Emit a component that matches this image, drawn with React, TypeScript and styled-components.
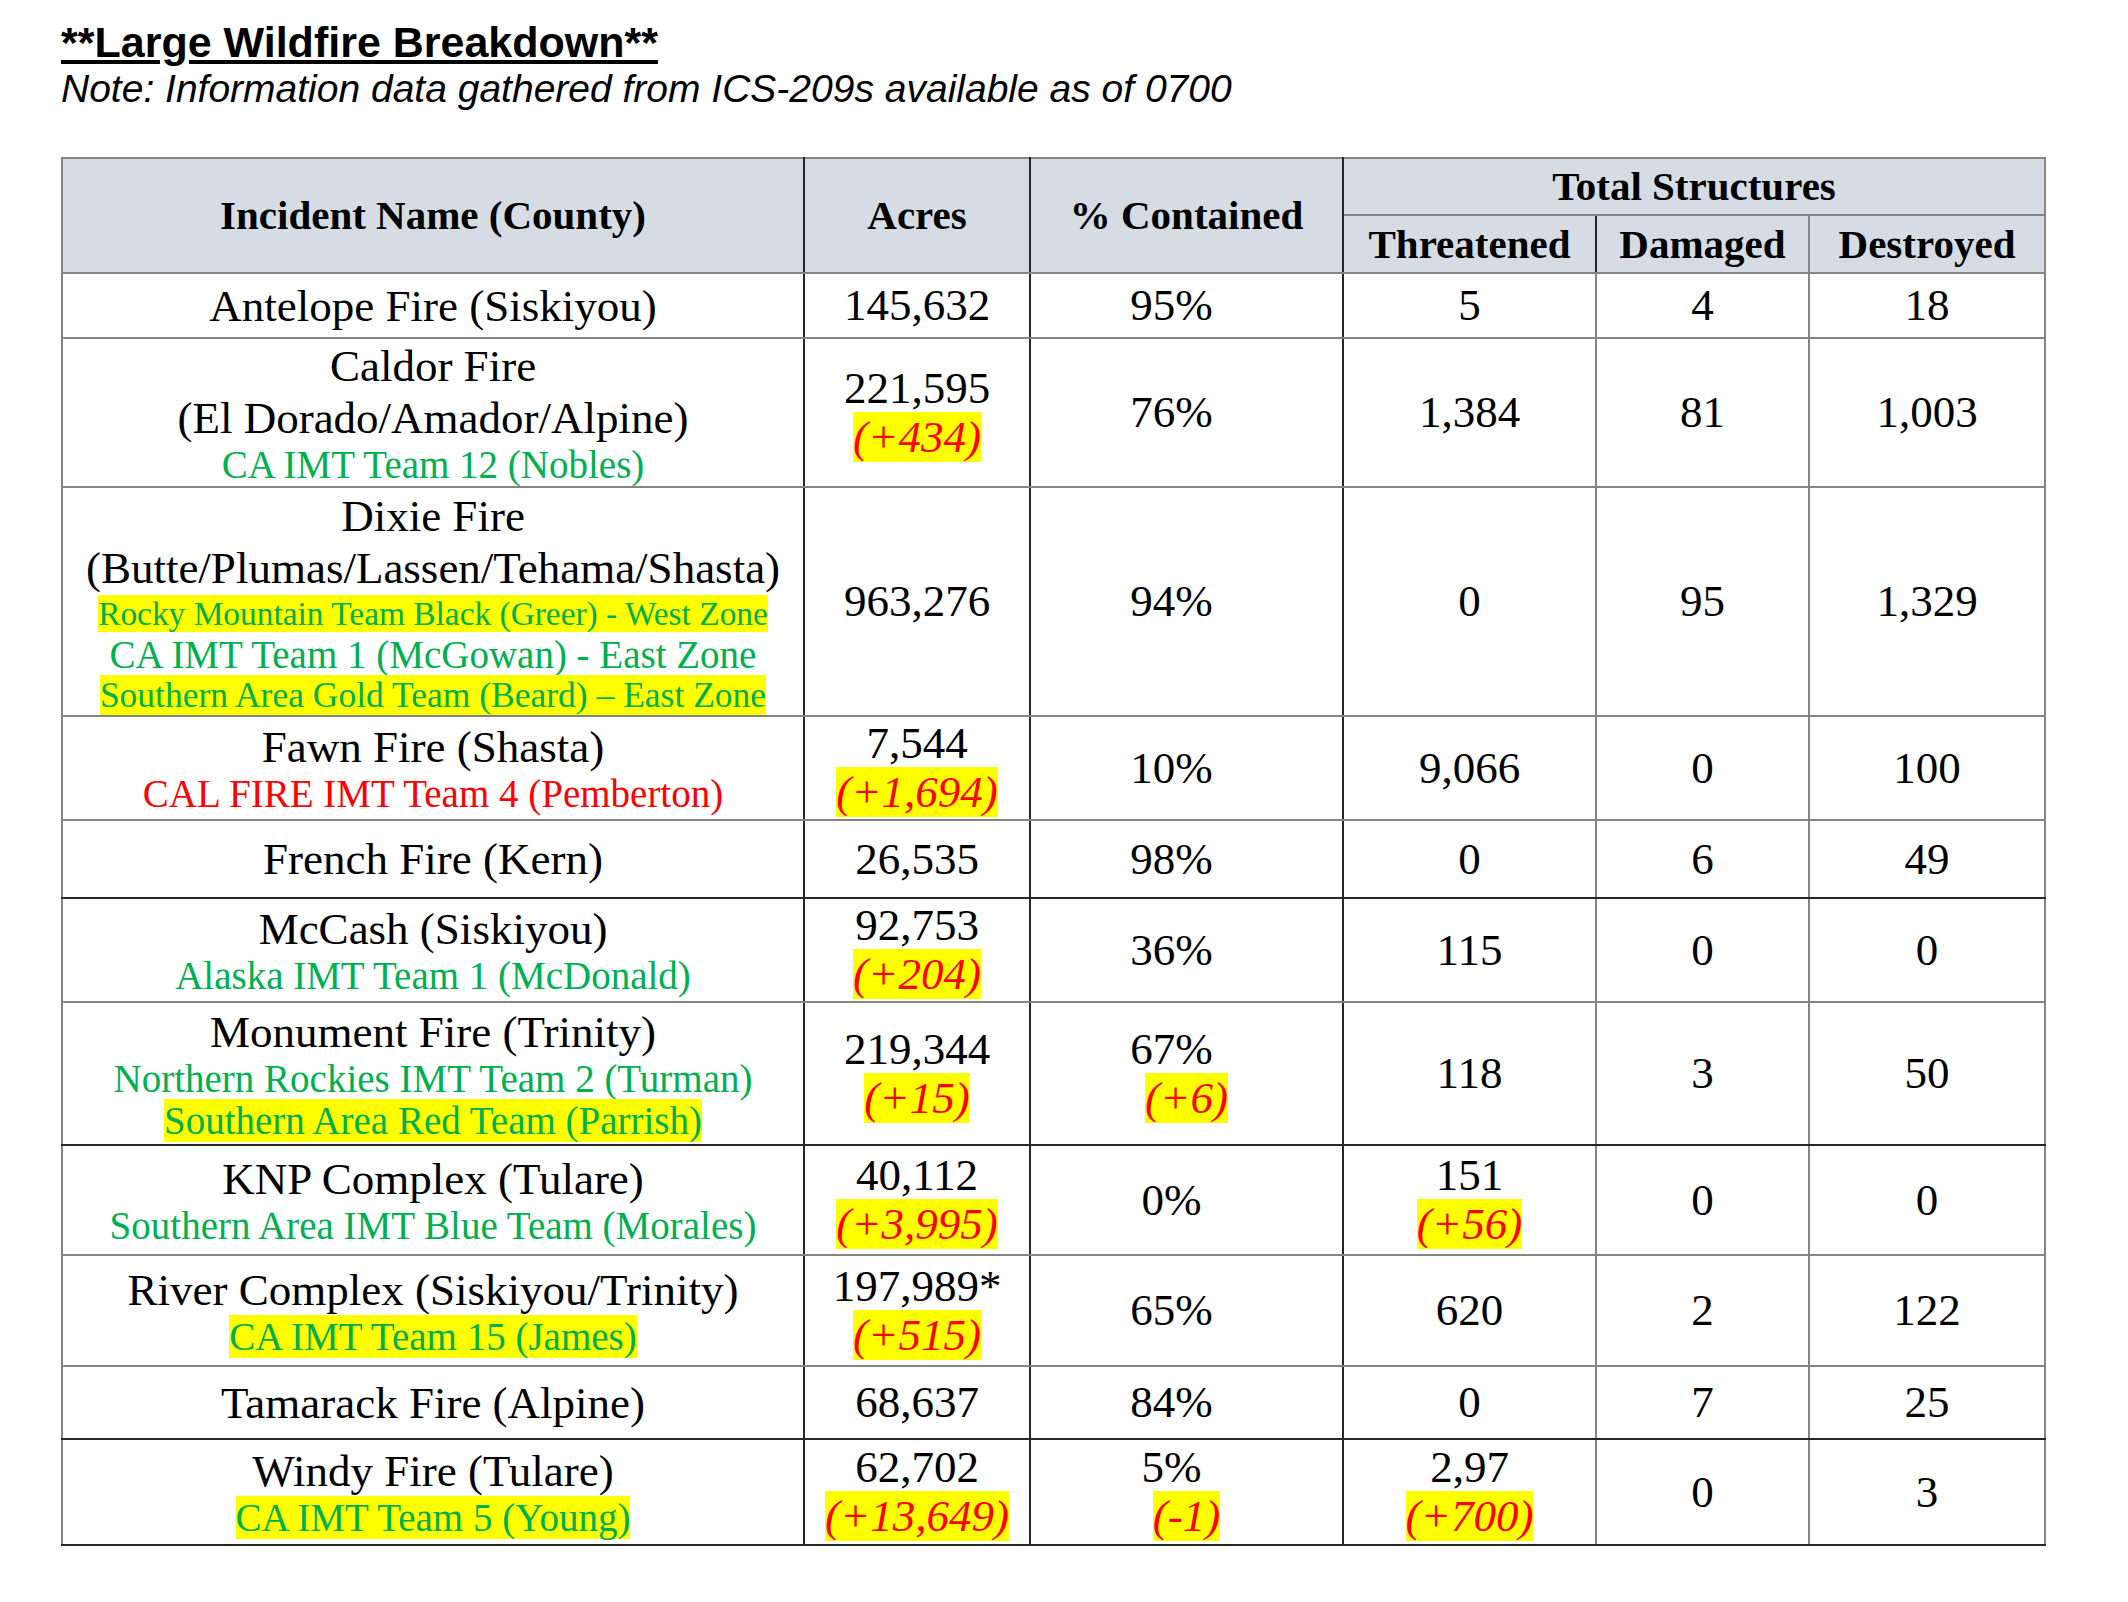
import React from "react";
import styled, { createGlobalStyle } from "styled-components";

const GREEN = "#00b050";
const RED = "#ff0000";
const YELLOW = "#ffff00";
const HEAD_BG = "#d5dce4";
const LINE_GRAY = "#858585";
const LINE_DARK = "#262626";

type Team = { text: string; hl?: boolean; color?: string; size?: number; lh?: number };
type Val = { v: string; d?: string };
type Incident = {
  h: number;
  bottom: "gray" | "dark";
  name: string[];
  teams: Team[];
  acres: Val;
  pct: Val;
  thr: Val;
  dam: string;
  des: string;
};

const incidents: Incident[] = [
  {
    h: 65,
    bottom: "gray",
    name: ["Antelope Fire (Siskiyou)"],
    teams: [],
    acres: { v: "145,632" },
    pct: { v: "95%" },
    thr: { v: "5" },
    dam: "4",
    des: "18",
  },
  {
    h: 149,
    bottom: "gray",
    name: ["Caldor Fire", "(El Dorado/Amador/Alpine)"],
    teams: [{ text: "CA IMT Team 12 (Nobles)" }],
    acres: { v: "221,595", d: "(+434)" },
    pct: { v: "76%" },
    thr: { v: "1,384" },
    dam: "81",
    des: "1,003",
  },
  {
    h: 229,
    bottom: "gray",
    name: ["Dixie Fire", "(Butte/Plumas/Lassen/Tehama/Shasta)"],
    teams: [
      { text: "Rocky Mountain Team Black (Greer) - West Zone", hl: true, size: 33.4, lh: 40 },
      { text: "CA IMT Team 1 (McGowan) - East Zone" },
      { text: "Southern Area Gold Team (Beard) \u2013 East Zone", hl: true, size: 35.5, lh: 38 },
    ],
    acres: { v: "963,276" },
    pct: { v: "94%" },
    thr: { v: "0" },
    dam: "95",
    des: "1,329",
  },
  {
    h: 104,
    bottom: "gray",
    name: ["Fawn Fire (Shasta)"],
    teams: [{ text: "CAL FIRE IMT Team 4 (Pemberton)", color: RED }],
    acres: { v: "7,544", d: "(+1,694)" },
    pct: { v: "10%" },
    thr: { v: "9,066" },
    dam: "0",
    des: "100",
  },
  {
    h: 78,
    bottom: "dark",
    name: ["French Fire (Kern)"],
    teams: [],
    acres: { v: "26,535" },
    pct: { v: "98%" },
    thr: { v: "0" },
    dam: "6",
    des: "49",
  },
  {
    h: 104,
    bottom: "gray",
    name: ["McCash (Siskiyou)"],
    teams: [{ text: "Alaska IMT Team 1 (McDonald)" }],
    acres: { v: "92,753", d: "(+204)" },
    pct: { v: "36%" },
    thr: { v: "115" },
    dam: "0",
    des: "0",
  },
  {
    h: 143,
    bottom: "dark",
    name: ["Monument Fire (Trinity)"],
    teams: [
      { text: "Northern Rockies IMT Team 2 (Turman)" },
      { text: "Southern Area Red Team (Parrish)", hl: true },
    ],
    acres: { v: "219,344", d: "(+15)" },
    pct: { v: "67%", d: "(+6)" },
    thr: { v: "118" },
    dam: "3",
    des: "50",
  },
  {
    h: 110,
    bottom: "gray",
    name: ["KNP Complex (Tulare)"],
    teams: [{ text: "Southern Area IMT Blue Team (Morales)" }],
    acres: { v: "40,112", d: "(+3,995)" },
    pct: { v: "0%" },
    thr: { v: "151", d: "(+56)" },
    dam: "0",
    des: "0",
  },
  {
    h: 111,
    bottom: "gray",
    name: ["River Complex (Siskiyou/Trinity)"],
    teams: [{ text: "CA IMT Team 15 (James)", hl: true }],
    acres: { v: "197,989*", d: "(+515)" },
    pct: { v: "65%" },
    thr: { v: "620" },
    dam: "2",
    des: "122",
  },
  {
    h: 73,
    bottom: "dark",
    name: ["Tamarack Fire (Alpine)"],
    teams: [],
    acres: { v: "68,637" },
    pct: { v: "84%" },
    thr: { v: "0" },
    dam: "7",
    des: "25",
  },
  {
    h: 106,
    bottom: "dark",
    name: ["Windy Fire (Tulare)"],
    teams: [{ text: "CA IMT Team 5 (Young)", hl: true }],
    acres: { v: "62,702", d: "(+13,649)" },
    pct: { v: "5%", d: "(-1)" },
    thr: { v: "2,97", d: "(+700)" },
    dam: "0",
    des: "3",
  },
];

const GlobalStyle = createGlobalStyle`
  html, body {
    margin: 0;
    padding: 0;
    background: #ffffff;
  }
  body {
    font-family: "Liberation Serif", "Times New Roman", serif;
    color: #000000;
  }
`;

const Page = styled.div`
  width: 2128px;
  min-height: 1602px;
  box-sizing: border-box;
  padding: 18px 0 0 61px;
`;

const Heading = styled.div`
  font-family: "Liberation Sans", Arial, sans-serif;
  font-size: 43px;
  font-weight: 700;
  line-height: 1.15;

  span {
    text-decoration: underline;
    text-decoration-thickness: 4px;
    text-underline-offset: 3px;
  }
`;

const Note = styled.div`
  font-family: "Liberation Sans", Arial, sans-serif;
  font-size: 39px;
  font-style: italic;
  line-height: 1.15;
`;

const Table = styled.table`
  margin-top: 45px;
  width: 1983px;
  table-layout: fixed;
  border-collapse: collapse;
  border: 2px solid ${LINE_DARK};
`;

const HeadRow = styled.tr<{ $h: number }>`
  height: ${(p) => p.$h}px;
`;

const HeadCell = styled.th<{ $dark?: boolean }>`
  background: ${HEAD_BG};
  font-size: 41px;
  font-weight: 700;
  line-height: 1.1;
  text-align: center;
  vertical-align: middle;
  padding: 0 6px;
  border: 2px solid ${LINE_GRAY};
  border-right-color: ${(p) => (p.$dark ? LINE_DARK : LINE_GRAY)};
  white-space: nowrap;
`;

const Row = styled.tr<{ $h: number; $bottom: "gray" | "dark" }>`
  height: ${(p) => p.$h}px;

  td {
    border-bottom-color: ${(p) => (p.$bottom === "dark" ? LINE_DARK : LINE_GRAY)};
  }
`;

const Cell = styled.td<{ $dark?: boolean; $shift?: number }>`
  text-align: center;
  vertical-align: middle;
  padding: 0 ${(p) => 6 + (p.$shift ?? 0)}px 0 6px;
  border: 2px solid ${LINE_GRAY};
  border-right-color: ${(p) => (p.$dark ? LINE_DARK : LINE_GRAY)};
  white-space: nowrap;
`;

const NameLine = styled.div`
  font-size: 45px;
  line-height: 52px;
`;

const TeamLine = styled.div<{ $size: number; $lh: number; $color: string }>`
  font-size: ${(p) => p.$size}px;
  line-height: ${(p) => p.$lh}px;
  color: ${(p) => p.$color};
`;

const Highlight = styled.span<{ $on?: boolean }>`
  background: ${(p) => (p.$on ? YELLOW : "transparent")};
`;

const NumLine = styled.div<{ $indent?: number }>`
  font-size: 45px;
  line-height: 49px;
  padding-left: ${(p) => p.$indent ?? 0}px;
`;

const Delta = styled.span`
  color: ${RED};
  font-style: italic;
  background: ${YELLOW};
`;

function Figure({ value, indent }: { value: Val; indent?: number }) {
  return (
    <>
      <NumLine>{value.v}</NumLine>
      {value.d && (
        <NumLine $indent={indent}>
          <Delta>{value.d}</Delta>
        </NumLine>
      )}
    </>
  );
}

export default function App() {
  return (
    <Page>
      <GlobalStyle />
      <Heading>
        <span>**Large Wildfire Breakdown**</span>
      </Heading>
      <Note>Note: Information data gathered from ICS-209s available as of 0700</Note>

      <Table>
        <colgroup>
          <col style={{ width: 742 }} />
          <col style={{ width: 226 }} />
          <col style={{ width: 313 }} />
          <col style={{ width: 253 }} />
          <col style={{ width: 213 }} />
          <col style={{ width: 236 }} />
        </colgroup>
        <thead>
          <HeadRow $h={57}>
            <HeadCell rowSpan={2} $dark>
              Incident Name (County)
            </HeadCell>
            <HeadCell rowSpan={2} $dark>
              Acres
            </HeadCell>
            <HeadCell rowSpan={2} $dark>
              % Contained
            </HeadCell>
            <HeadCell colSpan={3}>Total Structures</HeadCell>
          </HeadRow>
          <HeadRow $h={58}>
            <HeadCell $dark>Threatened</HeadCell>
            <HeadCell>Damaged</HeadCell>
            <HeadCell>Destroyed</HeadCell>
          </HeadRow>
        </thead>
        <tbody>
          {incidents.map((row) => (
            <Row key={row.name[0]} $h={row.h} $bottom={row.bottom}>
              <Cell $dark>
                {row.name.map((n) => (
                  <NameLine key={n}>{n}</NameLine>
                ))}
                {row.teams.map((t) => (
                  <TeamLine
                    key={t.text}
                    $size={t.size ?? 39}
                    $lh={t.lh ?? 42}
                    $color={t.color ?? GREEN}
                  >
                    <Highlight $on={t.hl}>{t.text}</Highlight>
                  </TeamLine>
                ))}
              </Cell>
              <Cell $dark>
                <Figure value={row.acres} />
              </Cell>
              <Cell $dark $shift={30}>
                <Figure value={row.pct} indent={30} />
              </Cell>
              <Cell>
                <Figure value={row.thr} />
              </Cell>
              <Cell>
                <NumLine>{row.dam}</NumLine>
              </Cell>
              <Cell>
                <NumLine>{row.des}</NumLine>
              </Cell>
            </Row>
          ))}
        </tbody>
      </Table>
    </Page>
  );
}
